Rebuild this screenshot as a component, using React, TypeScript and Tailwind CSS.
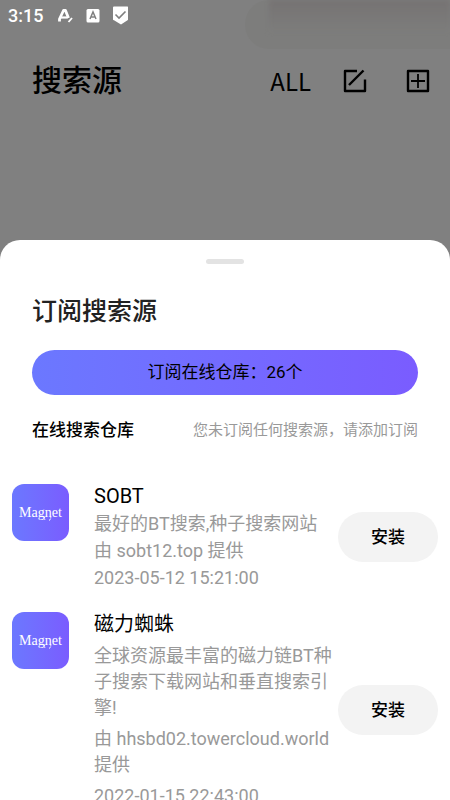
import type { ReactNode } from "react"

type Source = {
    name: string
    desc: string
    host: string
    date: string
    spacing: string
}

const sources: Source[] = [
    {
        name: "SOBT",
        desc: "最好的BT搜索,种子搜索网站",
        host: "由 sobt12.top 提供",
        date: "2023-05-12 15:21:00",
        spacing: "gap-px",
    },
    {
        name: "磁力蜘蛛",
        desc: "全球资源最丰富的磁力链BT种子搜索下载网站和垂直搜索引擎!",
        host: "由 hhsbd02.towercloud.world 提供",
        date: "2022-01-15 22:43:00",
        spacing: "gap-[5px]",
    },
]

function StatusBar() {
    return (
        <div className="relative flex h-8 items-center pl-2 text-white">
            <span className="w-12 text-lg font-medium">3:15</span>
            <svg className="h-5 w-5" viewBox="0 0 20 20" fill="none" stroke="currentColor">
                <path d="M3.500 15.500V13L7.500 4.500H9.500L12.500 12" strokeWidth="2.800" strokeLinejoin="round" />
                <path d="M5 11.500H11.500" strokeWidth="2.200" />
                <path d="M12.500 16L16 12" strokeWidth="1.800" />
            </svg>
            <svg className="ml-2 h-5 w-5" viewBox="0 0 20 20">
                <rect x="2.500" y="3" width="13" height="13.500" rx="1.500" fill="currentColor" />
                <path d="M6 13L9 6L12 13M7.500 11H10.500" fill="none" stroke="#808080" strokeWidth="1.500" />
            </svg>
            <svg className="ml-2 h-5 w-5" viewBox="0 0 20 20">
                <path d="M2 0.500H15.500Q16 0.500 16 1V13.500Q16 14 15.500 14.300L9 18.500L2 14.300Q1 14 1 13.500V1.500Q1 0.500 2 0.500Z" fill="currentColor" />
                <path d="M3.500 8.500L7 12L13.500 5.500" fill="none" stroke="#808080" strokeWidth="1.600" />
            </svg>
        </div>
    )
}

function IconButton({ label, children }: { label: string; children: ReactNode }) {
    return (
        <button type="button" aria-label={label} className="block">
            <svg className="h-6 w-6" viewBox="0 0 24 24" fill="none" stroke="currentColor" strokeLinejoin="round">
                {children}
            </svg>
        </button>
    )
}

function MagnetLogo() {
    return (
        <div className="relative mt-0.5 flex h-[57px] w-[57px] shrink-0 items-center justify-center self-start rounded-xl bg-linear-to-r from-[#6b78ff] to-[#7a5cff] font-['Liberation_Serif',serif] text-sm leading-4 text-white">
            Magnet
            <svg className="absolute inset-0 h-full w-full" viewBox="0 0 57 57" fill="none" stroke="currentColor" strokeWidth="1">
                <path d="M33 32.500Q32 34 33 36M38.500 32.500Q39.500 35 37 36.500" strokeDasharray="2 0.600" />
            </svg>
        </div>
    )
}

function SourceItem({ source }: { source: Source }) {
    return (
        <li className="flex items-center">
            <MagnetLogo />
            <div className={"ml-[25px] flex min-w-0 flex-1 flex-col text-lg leading-[26px] text-[#999] " + source.spacing}>
                <h3 className="text-xl leading-7 text-black">{source.name}</h3>
                <p>{source.desc}</p>
                <p>{source.host}</p>
                <p>{source.date}</p>
            </div>
            <button type="button" className="ml-1 h-[50px] w-[100px] shrink-0 rounded-full bg-[#f3f3f3] pt-0.5 text-[17px] font-medium text-black">
                安装
            </button>
        </li>
    )
}

export default function App() {
    return (
        <div className="flex h-screen flex-col overflow-hidden bg-[#808080] font-[Roboto,'Noto_Sans_CJK_SC',sans-serif]">
            <header className="relative h-[30vh] shrink-0 text-black">
                <div className="absolute top-0 right-0 h-[49px] w-[205px] overflow-hidden rounded-l-3xl bg-[#7d7d7c]">
                    <div className="ml-6 h-8 bg-linear-to-b from-[#767373] to-[#7d7d7c] blur-[2px]" />
                </div>
                <StatusBar />
                <div className="flex h-24 items-center pt-0.5 pr-5 pl-8">
                    <h1 className="flex-1 text-3xl font-medium">搜索源</h1>
                    <button type="button" className="mr-8 font-['Noto_Sans_CJK_SC',sans-serif] text-2xl">ALL</button>
                    <IconButton label="编辑">
                        <path d="M14 2H2V22H22V10.500" strokeWidth="2.400" />
                        <path d="M6 16L20.500 1.500" strokeWidth="2.400" />
                    </IconButton>
                    <div className="w-[39px]" />
                    <IconButton label="添加">
                        <path d="M2 2H22V22H2Z" strokeWidth="2.400" />
                        <path d="M12 5V19M5 12H19" strokeWidth="1.800" />
                    </IconButton>
                </div>
            </header>

            <main className="min-h-0 flex-1 overflow-hidden rounded-t-[20px] bg-white">
                <div className="mx-auto mt-[19px] h-[5px] w-[38px] rounded-full bg-[#e3e3e3]" />
                <div className="px-8">
                    <h2 className="mt-[30px] text-[25px] leading-9 font-medium text-[#222]">订阅搜索源</h2>
                    <button type="button" className="mt-5 h-[45px] w-full rounded-full bg-linear-to-r from-[#6b78ff] to-[#7a5cff] text-[17px] text-black">
                        订阅在线仓库：26个
                    </button>
                    <div className="mt-5 flex items-center justify-between leading-[30px]">
                        <h3 className="text-[17px] font-medium text-black">在线搜索仓库</h3>
                        <span className="text-[15px] text-[#999]">您未订阅任何搜索源，请添加订阅</span>
                    </div>
                </div>
                <ul className="mt-[37px] flex flex-col gap-[19px] px-3">
                    {sources.map((source) => (
                        <SourceItem key={source.name} source={source} />
                    ))}
                </ul>
            </main>
        </div>
    )
}
